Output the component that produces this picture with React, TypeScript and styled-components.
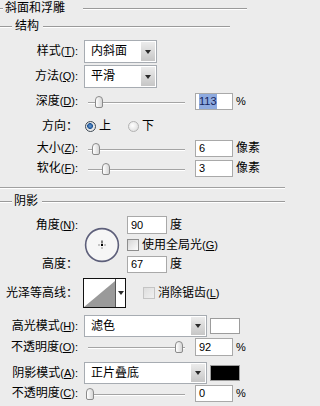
import React from 'react'
import styled, { createGlobalStyle } from 'styled-components'

const GlobalStyle = createGlobalStyle`
  html, body {
    margin: 0;
    padding: 0;
    background: #ececec;
  }
  body {
    font-family: "Liberation Sans", "Noto Sans CJK SC", sans-serif;
  }
`

const Panel = styled.div`
  width: 285px;
  height: 406px;
  overflow: hidden;
  background: #ececec;
  color: #000;
  font-size: 12px;
  line-height: 15px;
  display: flex;
  flex-direction: column;
`

const Legend = styled.div<{ $h: number; $mt: number; $right: number }>`
  display: flex;
  align-items: center;
  flex-shrink: 0;
  height: ${(p) => p.$h}px;
  margin-top: ${(p) => p.$mt}px;
  padding-right: ${(p) => p.$right}px;
`

const Stub = styled.span<{ $w: number }>`
  width: ${(p) => p.$w}px;
  height: 1px;
  background: #9a9a9a;
  box-shadow: 0 1px 0 #fff;
  flex-shrink: 0;
`

const LegendText = styled.span<{ $ml: number; $mr: number }>`
  margin: 0 ${(p) => p.$mr}px 0 ${(p) => p.$ml}px;
  white-space: nowrap;
`

const LegendRule = styled.span`
  flex: 1;
  height: 1px;
  background: #9a9a9a;
  box-shadow: 0 1px 0 #fff;
`

const Divider = styled.div<{ $mt: number }>`
  flex-shrink: 0;
  height: 1px;
  margin-top: ${(p) => p.$mt}px;
  background: #a0a0a0;
  box-shadow: 0 1px 0 #fff;
`

const Row = styled.div<{ $h: number; $mt: number }>`
  display: flex;
  align-items: center;
  flex-shrink: 0;
  height: ${(p) => p.$h}px;
  margin-top: ${(p) => p.$mt}px;
`

const Label = styled.span`
  width: 78px;
  flex-shrink: 0;
  text-align: right;
  white-space: nowrap;
`

const Hot = styled.span`
  font-size: 11px;
  font-family: "Liberation Sans", sans-serif;
`

const Under = styled.span`
  text-decoration: underline;
`

const Select = styled.div<{ $w: number }>`
  width: ${(p) => p.$w}px;
  height: 100%;
  margin-left: 6px;
  box-sizing: border-box;
  border: 1px solid #a7acb2;
  background: #fff;
  display: flex;
  flex-shrink: 0;
`

const SelectText = styled.span`
  flex: 1;
  padding-left: 6px;
  display: flex;
  align-items: center;
`

const DropButton = styled.span`
  width: 14px;
  margin: 1px;
  background: linear-gradient(#ececec, #c6c6c6);
  display: flex;
  align-items: center;
  justify-content: center;
`

const Arrow = styled.span`
  width: 0;
  height: 0;
  border-left: 3.5px solid transparent;
  border-right: 3.5px solid transparent;
  border-top: 4px solid #2a2a2a;
`

const Swatch = styled.span<{ $color: string }>`
  width: 30px;
  height: 16px;
  margin-left: 3px;
  box-sizing: border-box;
  border: 1px solid #9c9c9c;
  background: ${(p) => p.$color};
  flex-shrink: 0;
`

const Slider = styled.div`
  position: relative;
  width: 101px;
  height: 14px;
  margin-left: 8px;
  flex-shrink: 0;
`

const Track = styled.div`
  position: absolute;
  left: 2px;
  right: 2px;
  top: 7px;
  height: 1px;
  background: #a4a4a4;
  box-shadow: 0 1px 0 #fff;
`

const Thumb = styled.div`
  position: absolute;
  top: 1px;
  width: 8px;
  height: 12px;
  box-sizing: border-box;
  border: 1px solid #8a8a8a;
  border-radius: 4px 4px 2px 2px;
  background: linear-gradient(90deg, #fff, #d6d6d6);
`

const Field = styled.div<{ $w: number; $ml: number }>`
  width: ${(p) => p.$w}px;
  height: 100%;
  margin-left: ${(p) => p.$ml}px;
  box-sizing: border-box;
  border: 1px solid #a9a9a9;
  background: #fff;
  padding-left: 3px;
  font-size: 11px;
  display: flex;
  align-items: center;
  flex-shrink: 0;
`

const Selected = styled.span`
  background: #8eaadf;
  color: #14245e;
`

const Unit = styled.span<{ $latin?: boolean }>`
  margin-left: 3px;
  font-size: ${(p) => (p.$latin ? '11px' : '12px')};
  white-space: nowrap;
`

const Radio = styled.span<{ $on: boolean }>`
  width: 11px;
  height: 11px;
  box-sizing: border-box;
  border-radius: 50%;
  flex-shrink: 0;
  border: 1px solid ${(p) => (p.$on ? '#3e4954' : '#b3b3b3')};
  background: ${(p) =>
    p.$on
      ? 'radial-gradient(circle at 45% 45%, #6d9fd6 0, #1f5596 2.6px, #e4e4e4 3.2px, #f4f4f4 100%)'
      : 'radial-gradient(circle at 40% 40%, #fff, #d8d8d8)'};
`

const RadioText = styled.span<{ $ml: number }>`
  margin-left: ${(p) => p.$ml}px;
`

const Check = styled.span<{ $disabled?: boolean }>`
  width: 12px;
  height: 12px;
  box-sizing: border-box;
  flex-shrink: 0;
  border: 1px solid ${(p) => (p.$disabled ? '#c4c4c4' : '#8e8e8e')};
  background: ${(p) =>
    p.$disabled ? 'linear-gradient(135deg, #dedede, #f0f0f0)' : 'linear-gradient(135deg, #d6d6d6, #fcfcfc)'};
`

const CheckText = styled.span<{ $ml: number }>`
  margin-left: ${(p) => p.$ml}px;
  white-space: nowrap;
`

const AngleGrid = styled.div`
  display: grid;
  grid-template-columns: 84px 43px auto;
  grid-template-rows: 18px 14px 17px;
  row-gap: 4px;
  margin-top: 8px;
  flex-shrink: 0;
`

const GridLabel = styled.span<{ $row: number }>`
  grid-column: 1;
  grid-row: ${(p) => p.$row};
  padding-right: 6px;
  text-align: right;
  white-space: nowrap;
  align-self: center;
`

const GridCell = styled.div<{ $row: number }>`
  grid-column: 3;
  grid-row: ${(p) => p.$row};
  display: flex;
  align-items: center;
`

const Dial = styled.svg`
  grid-column: 2;
  grid-row: 1 / 4;
  align-self: center;
`

const Contour = styled.div`
  width: 43px;
  height: 30px;
  margin-left: 5px;
  box-sizing: border-box;
  border: 1px solid #111;
  background: #fff;
  display: flex;
  flex-shrink: 0;
`

const ContourArrow = styled.span`
  flex: 1;
  border-left: 1px solid #555;
  display: flex;
  align-items: center;
  justify-content: center;
`

type SliderRowProps = {
  label: React.ReactNode
  pos: number
  value: React.ReactNode
  unit: string
  latinUnit?: boolean
  mt: number
  h: number
}

function SliderRow({ label, pos, value, unit, latinUnit, mt, h }: SliderRowProps) {
  return (
    <Row $h={h} $mt={mt}>
      <Label>{label}</Label>
      <Slider>
        <Track />
        <Thumb style={{ left: `${Math.round(pos * 93)}px` }} />
      </Slider>
      <Field $w={38} $ml={8}>
        {value}
      </Field>
      <Unit $latin={latinUnit}>{unit}</Unit>
    </Row>
  )
}

function Key({ k, colon = true }: { k: string; colon?: boolean }) {
  return (
    <Hot>
      (<Under>{k}</Under>){colon ? ':' : ''}
    </Hot>
  )
}

export default function App() {
  return (
    <>
      <GlobalStyle />
      <Panel>
        <Legend $h={16} $mt={0} $right={38}>
          <Stub $w={3} />
          <LegendText $ml={2} $mr={18}>斜面和浮雕</LegendText>
          <LegendRule />
        </Legend>

        <Legend $h={14} $mt={3} $right={55}>
          <Stub $w={12} />
          <LegendText $ml={3} $mr={4}>结构</LegendText>
          <LegendRule />
        </Legend>

        <Row $h={23} $mt={7}>
          <Label>
            样式<Key k="T" />
          </Label>
          <Select $w={73}>
            <SelectText>内斜面</SelectText>
            <DropButton>
              <Arrow />
            </DropButton>
          </Select>
        </Row>
        <Row $h={23} $mt={2}>
          <Label>
            方法<Key k="Q" />
          </Label>
          <Select $w={73}>
            <SelectText>平滑</SelectText>
            <DropButton>
              <Arrow />
            </DropButton>
          </Select>
        </Row>

        <SliderRow
          h={17}
          mt={5}
          label={<>深度<Key k="D" /></>}
          pos={0.097}
          value={<Selected>113</Selected>}
          unit="%"
          latinUnit
        />

        <Row $h={17} $mt={8}>
          <Label>方向：</Label>
          <Radio $on style={{ marginLeft: 7 }} />
          <RadioText $ml={3}>上</RadioText>
          <Radio $on={false} style={{ marginLeft: 17 }} />
          <RadioText $ml={3}>下</RadioText>
        </Row>

        <SliderRow h={17} mt={5} label={<>大小<Key k="Z" /></>} pos={0.065} value="6" unit="像素" />
        <SliderRow h={17} mt={3} label={<>软化<Key k="F" /></>} pos={0.17} value="3" unit="像素" />

        <Divider $mt={10} />

        <Legend $h={14} $mt={6} $right={0}>
          <Stub $w={12} />
          <LegendText $ml={2} $mr={4}>阴影</LegendText>
          <LegendRule />
        </Legend>

        <AngleGrid>
          <GridLabel $row={1}>
            角度<Key k="N" />
          </GridLabel>
          <Dial width="36" height="36" viewBox="0 0 36 36">
            <circle cx="18" cy="18" r="16.4" fill="#f6f6f6" stroke="#5d5f7a" strokeWidth="1.6" />
            <rect x="17" y="17" width="2" height="2" fill="#000" />
            <rect x="17.5" y="13.5" width="1" height="3" fill="#000" />
            <rect x="14.5" y="17.5" width="1" height="1" fill="#333" />
            <rect x="20.5" y="17.5" width="1" height="1" fill="#333" />
            <rect x="17.5" y="20.5" width="1" height="1" fill="#333" />
          </Dial>
          <GridCell $row={1}>
            <Field $w={40} $ml={0}>90</Field>
            <Unit>度</Unit>
          </GridCell>
          <GridCell $row={2}>
            <Check />
            <CheckText $ml={3}>
              使用全局光<Key k="G" colon={false} />
            </CheckText>
          </GridCell>
          <GridLabel $row={3}>高度：</GridLabel>
          <GridCell $row={3}>
            <Field $w={40} $ml={0}>67</Field>
            <Unit>度</Unit>
          </GridCell>
        </AngleGrid>

        <Row $h={30} $mt={5}>
          <Label>光泽等高线：</Label>
          <Contour>
            <svg width="31" height="28" viewBox="0 0 31 28">
              <polygon points="0,28 31,2 31,28" fill="#9a9a9a" />
            </svg>
            <ContourArrow>
              <Arrow />
            </ContourArrow>
          </Contour>
          <Check $disabled style={{ marginLeft: 17 }} />
          <CheckText $ml={3}>
            消除锯齿<Key k="L" colon={false} />
          </CheckText>
        </Row>

        <Row $h={22} $mt={7}>
          <Label>
            高光模式<Key k="H" />
          </Label>
          <Select $w={123}>
            <SelectText>滤色</SelectText>
            <DropButton>
              <Arrow />
            </DropButton>
          </Select>
          <Swatch $color="#ffffff" />
        </Row>
        <SliderRow
          h={18}
          mt={1}
          label={<>不透明度<Key k="O" /></>}
          pos={0.957}
          value="92"
          unit="%"
          latinUnit
        />

        <Row $h={22} $mt={6}>
          <Label>
            阴影模式<Key k="A" />
          </Label>
          <Select $w={123}>
            <SelectText>正片叠底</SelectText>
            <DropButton>
              <Arrow />
            </DropButton>
          </Select>
          <Swatch $color="#000000" />
        </Row>
        <SliderRow
          h={17}
          mt={1}
          label={<>不透明度<Key k="C" /></>}
          pos={0}
          value="0"
          unit="%"
          latinUnit
        />
      </Panel>
    </>
  )
}
